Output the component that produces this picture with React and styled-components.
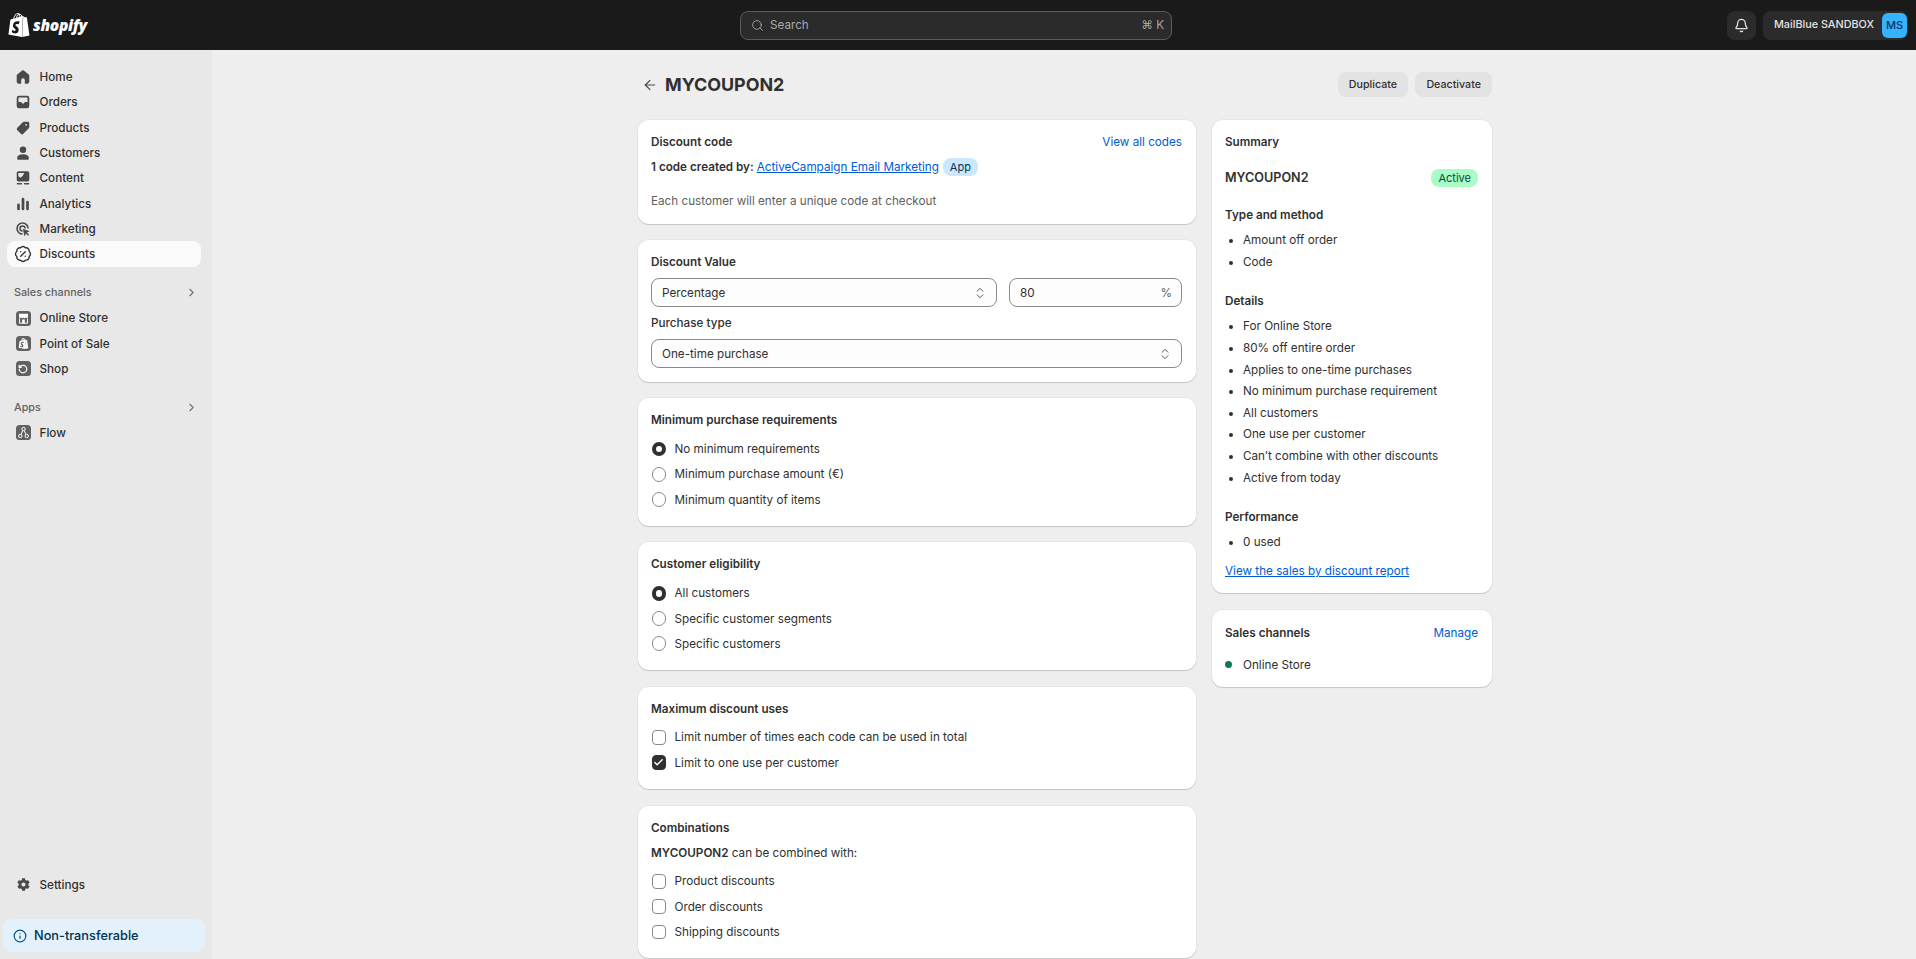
import React from 'react';
import styled, {createGlobalStyle} from 'styled-components';
import {ArrowLeft, BadgePercent, Bell, Check, ChevronRight, ChevronsUpDown, Info, RotateCcw, Search} from 'lucide-react';
import {FaCog} from 'react-icons/fa';
import {SiShopify} from 'react-icons/si';

const GlobalStyle = createGlobalStyle`
    html, body {
        margin: 0;
        height: 100%;
        overflow: hidden;
        background: #eeeeee;
    }

    body {
        font-family: Inter, "Liberation Sans", sans-serif;
        font-size: 11.7px;
        color: #303030;
    }

    * {
        box-sizing: border-box;
    }
`;

const Glyph = ({children}) => (
    <svg width="18" height="18" viewBox="0 0 20 20" fill="#4a4a4a" fillRule="evenodd">{children}</svg>
);

const HomeIcon = () => (
    <Glyph>
        <path d="M10.9 2.9a1.5 1.5 0 0 0-1.8 0L3.6 7.2A1.5 1.5 0 0 0 3 8.4V15a2.5 2.5 0 0 0 2.5 2.5H8v-4a2 2 0 0 1 4 0v4h2.5A2.5 2.5 0 0 0 17 15V8.4a1.5 1.5 0 0 0-.6-1.2z"/>
    </Glyph>
);

const OrdersIcon = () => (
    <Glyph>
        <path d="M5.5 3h9A2.5 2.5 0 0 1 17 5.5v9a2.5 2.5 0 0 1-2.5 2.5h-9A2.5 2.5 0 0 1 3 14.5v-9A2.5 2.5 0 0 1 5.5 3zM5 5.5a.5.5 0 0 1 .5-.5h9a.5.5 0 0 1 .5.5V10h-2.6a1 1 0 0 0-.9.6l-.3.6a1 1 0 0 1-.9.6H9.7a1 1 0 0 1-.9-.6l-.3-.6a1 1 0 0 0-.9-.6H5z"/>
    </Glyph>
);

const ProductsIcon = () => (
    <Glyph>
        <path d="M11 3h4.5A1.5 1.5 0 0 1 17 4.5V9a2 2 0 0 1-.6 1.4l-6 6a2 2 0 0 1-2.8 0l-3.9-3.9a2 2 0 0 1 0-2.9l6-6A2 2 0 0 1 11 3zM14.5 6.5a1 1 0 1 1-2 0 1 1 0 0 1 2 0z"/>
    </Glyph>
);

const CustomersIcon = () => (
    <Glyph>
        <circle cx="10" cy="6.3" r="3.6"/>
        <path d="M3.5 15.5c0-2.5 2.5-4 6.5-4s6.5 1.5 6.5 4v.5a1.5 1.5 0 0 1-1.5 1.5H5A1.5 1.5 0 0 1 3.5 16z"/>
    </Glyph>
);

const ContentIcon = () => (
    <Glyph>
        <path d="M5 2.500h10a2 2 0 0 1 2 2v7.500a2 2 0 0 1-2 2H5a2 2 0 0 1-2-2V4.500a2 2 0 0 1 2-2zM4.800 4.500v3.500l2.500 1.800 2.500-2.300 1.500-3z"/>
        <rect x="3" y="15.5" width="6" height="1.6" rx=".8"/>
        <rect x="11" y="15.5" width="6" height="1.6" rx=".8"/>
    </Glyph>
);

const AnalyticsIcon = () => (
    <Glyph>
        <rect x="3.5" y="9.5" width="3" height="7.5" rx="1.5"/>
        <rect x="8.5" y="3" width="3" height="14" rx="1.5"/>
        <rect x="13.5" y="6.5" width="3" height="10.5" rx="1.5"/>
    </Glyph>
);

const MarketingIcon = () => (
    <Glyph>
        <path d="M9.5 2.5a7 7 0 0 1 7 7h-1.700a5.300 5.300 0 1 0-5.300 5.300v1.700a7 7 0 0 1 0-14z"/>
        <path d="M9.5 5.800a3.700 3.700 0 0 1 3.700 3.700h-1.700a2 2 0 1 0-2 2v1.700a3.700 3.700 0 0 1 0-7.400z"/>
        <path d="M9.800 9.800l7.700 2.600-3.200 1.500 2.400 2.400-1.100 1.100-2.400-2.400-1.500 3.200z"/>
    </Glyph>
);

const StoreIcon = () => (
    <svg width="11" height="11" viewBox="0 0 11 11" fill="none">
        <path d="M1 .8h9v3a1.200 1.200 0 0 1-2.200.6 1.400 1.400 0 0 1-2.300 0 1.400 1.400 0 0 1-2.300 0A1.200 1.200 0 0 1 1 3.800z" fill="#fff"/>
        <path d="M1.5 5.5v4.700h8V5.5" stroke="#fff" strokeWidth="1"/>
        <rect x="4.2" y="6.5" width="2.6" height="3.7" fill="#fff"/>
    </svg>
);

const FlowIcon = () => (
    <svg width="13" height="13" viewBox="0 0 13 13" fill="none" stroke="#fff" strokeWidth="1">
        <circle cx="6.5" cy="3" r="1.7"/>
        <circle cx="3.3" cy="10" r="1.7"/>
        <circle cx="9.7" cy="10" r="1.7"/>
        <path d="M5.7 4.600 4.100 8.400M7.300 4.600l1.600 3.800"/>
    </svg>
);

const mainNav = [
    {label: 'Home', icon: <HomeIcon/>},
    {label: 'Orders', icon: <OrdersIcon/>},
    {label: 'Products', icon: <ProductsIcon/>},
    {label: 'Customers', icon: <CustomersIcon/>},
    {label: 'Content', icon: <ContentIcon/>},
    {label: 'Analytics', icon: <AnalyticsIcon/>},
    {label: 'Marketing', icon: <MarketingIcon/>},
    {label: 'Discounts', icon: <BadgePercent size={18} strokeWidth={1.8} color="#303030"/>, active: true},
];

const channels = [
    {label: 'Online Store', icon: <StoreIcon/>},
    {label: 'Point of Sale', icon: <SiShopify size={11} color="#fff"/>},
    {label: 'Shop', icon: <RotateCcw size={10} strokeWidth={3} color="#fff"/>},
];

const detailItems = [
    'For Online Store',
    '80% off entire order',
    'Applies to one-time purchases',
    'No minimum purchase requirement',
    'All customers',
    'One use per customer',
    'Can’t combine with other discounts',
    'Active from today',
];

const Radio = ({checked, label}) => (
    <ChoiceRow>
        <RadioMark $checked={checked}/>
        {label}
    </ChoiceRow>
);

const Checkbox = ({checked, label}) => (
    <ChoiceRow>
        <CheckMark $checked={checked}>
            {checked ? <Check size={11} strokeWidth={3} color="#fff"/> : ''}
        </CheckMark>
        {label}
    </ChoiceRow>
);

const SelectBox = ({value}) => (
    <Field>
        {value}
        <ChevronsUpDown size={14} strokeWidth={1.6} color="#4a4a4a"/>
    </Field>
);

export default function App() {
    return (
        <div>
            <GlobalStyle/>

            <TopBar>
                <LogoArea>
                    <SiShopify size={24} color="#fff"/>
                    <LogoText>shopify</LogoText>
                </LogoArea>

                <SearchBox>
                    <Search size={13} strokeWidth={1.6} color="#a8a8a8"/>
                    <span>Search</span>
                    <Shortcut>⌘ K</Shortcut>
                </SearchBox>

                <TopActions>
                    <BellButton>
                        <Bell size={15} color="#e3e3e3"/>
                    </BellButton>
                    <AccountButton>
                        <span>MailBlue SANDBOX</span>
                        <Avatar>MS</Avatar>
                    </AccountButton>
                </TopActions>
            </TopBar>

            <Body>
                <Sidebar>
                    {mainNav.map(item => (
                        <NavItem key={item.label} $active={item.active}>
                            <IconSlot>{item.icon}</IconSlot>
                            {item.label}
                        </NavItem>
                    ))}

                    <NavHeading>
                        Sales channels
                        <ChevronRight size={13} color="#707070"/>
                    </NavHeading>
                    {channels.map(item => (
                        <NavItem key={item.label}>
                            <IconSlot><AppIcon>{item.icon}</AppIcon></IconSlot>
                            {item.label}
                        </NavItem>
                    ))}

                    <NavHeading>
                        Apps
                        <ChevronRight size={13} color="#707070"/>
                    </NavHeading>
                    <NavItem>
                        <IconSlot><AppIcon><FlowIcon/></AppIcon></IconSlot>
                        Flow
                    </NavItem>

                    <SettingsItem>
                        <IconSlot><FaCog size={13} color="#4a4a4a"/></IconSlot>
                        Settings
                    </SettingsItem>

                    <PlanBanner>
                        <Info size={14} strokeWidth={2} color="#00527c"/>
                        Non-transferable
                    </PlanBanner>
                </Sidebar>

                <Main>
                    <Page>
                        <PageHeader>
                            <TitleArea>
                                <ArrowLeft size={16} strokeWidth={1.8} color="#4a4a4a"/>
                                <PageTitle>MYCOUPON2</PageTitle>
                            </TitleArea>
                            <HeaderButtons>
                                <HeaderButton>Duplicate</HeaderButton>
                                <HeaderButton>Deactivate</HeaderButton>
                            </HeaderButtons>
                        </PageHeader>

                        <Columns>
                            <LeftColumn>
                                <Card>
                                    <CardHead>
                                        <CardTitle>Discount code</CardTitle>
                                        <PlainLink>View all codes</PlainLink>
                                    </CardHead>
                                    <CreatedBy>
                                        <strong>1 code created by:</strong>
                                        <UnderLink>ActiveCampaign Email Marketing</UnderLink>
                                        <AppBadge>App</AppBadge>
                                    </CreatedBy>
                                    <HelpText>Each customer will enter a unique code at checkout</HelpText>
                                </Card>

                                <Card>
                                    <CardTitle>Discount Value</CardTitle>
                                    <FieldRow>
                                        <SelectBox value="Percentage"/>
                                        <ValueField>
                                            80
                                            <Suffix>%</Suffix>
                                        </ValueField>
                                    </FieldRow>
                                    <FieldLabel>Purchase type</FieldLabel>
                                    <SelectBox value="One-time purchase"/>
                                </Card>

                                <Card>
                                    <CardTitle>Minimum purchase requirements</CardTitle>
                                    <Choices>
                                        <Radio checked label="No minimum requirements"/>
                                        <Radio label="Minimum purchase amount (€)"/>
                                        <Radio label="Minimum quantity of items"/>
                                    </Choices>
                                </Card>

                                <Card>
                                    <CardTitle>Customer eligibility</CardTitle>
                                    <Choices>
                                        <Radio checked label="All customers"/>
                                        <Radio label="Specific customer segments"/>
                                        <Radio label="Specific customers"/>
                                    </Choices>
                                </Card>

                                <Card>
                                    <CardTitle>Maximum discount uses</CardTitle>
                                    <Choices>
                                        <Checkbox label="Limit number of times each code can be used in total"/>
                                        <Checkbox checked label="Limit to one use per customer"/>
                                    </Choices>
                                </Card>

                                <Card>
                                    <CardTitle>Combinations</CardTitle>
                                    <CombineText><strong>MYCOUPON2</strong> can be combined with:</CombineText>
                                    <Choices>
                                        <Checkbox label="Product discounts"/>
                                        <Checkbox label="Order discounts"/>
                                        <Checkbox label="Shipping discounts"/>
                                    </Choices>
                                </Card>
                            </LeftColumn>

                            <RightColumn>
                                <Card>
                                    <CardTitle>Summary</CardTitle>
                                    <SummaryHead>
                                        <CodeName>MYCOUPON2</CodeName>
                                        <StatusBadge>Active</StatusBadge>
                                    </SummaryHead>

                                    <SummaryTitle>Type and method</SummaryTitle>
                                    <BulletList>
                                        <li>Amount off order</li>
                                        <li>Code</li>
                                    </BulletList>

                                    <SummaryTitle>Details</SummaryTitle>
                                    <BulletList>
                                        {detailItems.map(text => <li key={text}>{text}</li>)}
                                    </BulletList>

                                    <SummaryTitle>Performance</SummaryTitle>
                                    <BulletList>
                                        <li>0 used</li>
                                    </BulletList>
                                    <ReportLink>View the sales by discount report</ReportLink>
                                </Card>

                                <ChannelCard>
                                    <CardHead>
                                        <CardTitle>Sales channels</CardTitle>
                                        <PlainLink>Manage</PlainLink>
                                    </CardHead>
                                    <ChannelRow>
                                        <ChannelDot/>
                                        Online Store
                                    </ChannelRow>
                                </ChannelCard>
                            </RightColumn>
                        </Columns>
                    </Page>
                </Main>
            </Body>
        </div>
    );
}

const TopBar = styled.header`
    display: flex;
    align-items: center;
    height: 50px;
    background: #1a1a1a;
`;

const LogoArea = styled.div`
    display: flex;
    align-items: center;
    gap: 2px;
    width: 740px;
    padding-left: 7px;
`;

const LogoText = styled.span`
    font-family: "Open Sans", sans-serif;
    font-size: 15.5px;
    font-weight: 800;
    font-style: italic;
    letter-spacing: -0.3px;
    color: #fff;
`;

const SearchBox = styled.div`
    display: flex;
    align-items: center;
    gap: 6px;
    width: 432px;
    height: 29px;
    padding: 0 7px 0 10px;
    background: #2b2b2b;
    border: 1px solid #5c5c5c;
    border-radius: 8px;
    color: #a8a8a8;
    font-size: 11.7px;
`;

const Shortcut = styled.span`
    margin-left: auto;
    font-size: 11.7px;
`;

const TopActions = styled.div`
    display: flex;
    gap: 7px;
    margin-left: auto;
    padding-right: 8px;
`;

const BellButton = styled.div`
    display: flex;
    align-items: center;
    justify-content: center;
    width: 29px;
    height: 29px;
    background: #2b2b2b;
    border-radius: 8px;
`;

const AccountButton = styled.div`
    display: flex;
    align-items: center;
    justify-content: space-between;
    width: 145px;
    height: 29px;
    padding: 0 1px 0 11px;
    background: #2b2b2b;
    border-radius: 8px;
    color: #e3e3e3;
    font-size: 10.8px;
    font-weight: 500;

    span {
        margin-bottom: 2px;
    }
`;

const Avatar = styled.div`
    display: flex;
    align-items: center;
    justify-content: center;
    width: 25px;
    height: 25px;
    background: #36b3ff;
    border-radius: 6px;
    color: #00335a;
    font-size: 11px;
`;

const Body = styled.div`
    display: flex;
    height: 909px;
`;

const Sidebar = styled.nav`
    display: flex;
    flex-direction: column;
    flex: none;
    width: 212px;
    padding: 14.4px 11px 7px 7px;
    background: #e8e8e8;
`;

const NavItem = styled.div`
    display: flex;
    align-items: center;
    gap: 7.5px;
    height: 25.3px;
    padding-left: 7px;
    border-radius: 8px;
    background: ${props => props.$active ? '#fafafa' : 'transparent'};
    font-size: 11.7px;
    font-weight: 500;
    color: #303030;
`;

const SettingsItem = styled(NavItem)`
    margin-top: auto;
`;

const IconSlot = styled.span`
    display: flex;
    align-items: center;
    justify-content: center;
    flex: none;
    width: 18px;
    height: 18px;
`;

const AppIcon = styled.span`
    display: flex;
    align-items: center;
    justify-content: center;
    width: 15px;
    height: 15px;
    background: #616161;
    border-radius: 3.5px;
`;

const NavHeading = styled.div`
    display: flex;
    align-items: center;
    justify-content: space-between;
    height: 25.8px;
    margin-top: 13px;
    padding: 0 3px 0 7px;
    font-size: 10.8px;
    font-weight: 500;
    color: #616161;
`;

const PlanBanner = styled.div`
    display: flex;
    align-items: center;
    gap: 7px;
    height: 33px;
    margin: 21.5px -4px 0 -4px;
    padding-left: 10px;
    background: #e3f1fd;
    border-radius: 8px;
    color: #00334f;
    font-size: 12.75px;
    font-weight: 500;
`;

const Main = styled.main`
    flex: 1;
    padding: 22px 0 0 2px;
`;

const Page = styled.div`
    width: 854px;
    margin: 0 auto;
`;

const PageHeader = styled.div`
    display: flex;
    align-items: center;
    justify-content: space-between;
    height: 25px;
    margin-bottom: 22.7px;
`;

const TitleArea = styled.div`
    display: flex;
    align-items: center;
    gap: 7px;
    padding-left: 4px;
`;

const PageTitle = styled.h1`
    margin: 0;
    font-size: 17.9px;
    font-weight: 700;
    color: #303030;
`;

const HeaderButtons = styled.div`
    display: flex;
    gap: 7.3px;
`;

const HeaderButton = styled.div`
    display: flex;
    align-items: center;
    height: 25px;
    padding: 0 11px;
    background: #e3e3e3;
    border-radius: 8px;
    font-size: 10.7px;
    font-weight: 550;
    color: #303030;
`;

const Columns = styled.div`
    display: flex;
    align-items: flex-start;
    gap: 16px;
`;

const LeftColumn = styled.div`
    display: flex;
    flex-direction: column;
    gap: 16.3px;
    width: 558px;
`;

const RightColumn = styled.div`
    display: flex;
    flex-direction: column;
    gap: 16.3px;
    width: 280px;
`;

const Card = styled.section`
    padding: 14px 14px 14px 13px;
    background: #fff;
    border-radius: 11px;
    box-shadow: 0 1px 1px rgba(26, 26, 26, 0.16), 0 0 0 1px rgba(26, 26, 26, 0.03);
    line-height: 16px;
    font-size: 11.7px;
`;

const ChannelCard = styled(Card)`
    padding-top: 15px;
`;

const CardHead = styled.div`
    display: flex;
    justify-content: space-between;
`;

const CardTitle = styled.h2`
    margin: 0;
    font-size: 11.7px;
    font-weight: 600;
    color: #303030;
`;

const PlainLink = styled.a`
    color: #005bd3;
`;

const CreatedBy = styled.div`
    display: flex;
    align-items: center;
    gap: 3px;
    height: 16px;
    margin-top: 9px;

    strong {
        font-weight: 600;
    }
`;

const UnderLink = styled.a`
    color: #005bd3;
    text-decoration: underline;
`;

const AppBadge = styled.span`
    padding: 1px 7px;
    margin-left: 1px;
    background: #cce8ff;
    border-radius: 8px;
    font-size: 11px;
    color: #00334f;
`;

const HelpText = styled.div`
    margin: 18px 0 1px;
    color: #616161;
`;

const FieldRow = styled.div`
    display: flex;
    gap: 12px;
    margin: 8px 0;

    > :first-child {
        flex: 1;
    }
`;

const Field = styled.div`
    display: flex;
    align-items: center;
    justify-content: space-between;
    height: 29px;
    padding: 1px 9px 0 10px;
    background: #fdfdfd;
    border: 1px solid #8a8a8a;
    border-radius: 8px;
    color: #303030;
`;

const ValueField = styled(Field)`
    width: 173px;
`;

const Suffix = styled.span`
    color: #616161;
`;

const FieldLabel = styled.div`
    margin-bottom: 8px;
    font-weight: 500;
`;

const Choices = styled.div`
    margin-top: 8.3px;
`;

const ChoiceRow = styled.label`
    display: flex;
    align-items: center;
    gap: 8px;
    height: 25.2px;
`;

const RadioMark = styled.span`
    flex: none;
    width: 14.5px;
    height: 14.5px;
    margin: 0 .5px;
    background: #fff;
    border-radius: 50%;
    border: ${props => props.$checked ? '4px solid #303030' : '1px solid #8a8a8a'};
`;

const CheckMark = styled.span`
    display: flex;
    align-items: center;
    justify-content: center;
    flex: none;
    width: 14.5px;
    height: 14.5px;
    margin: 0 .5px;
    border-radius: 4px;
    background: ${props => props.$checked ? '#303030' : '#fff'};
    border: 1px solid ${props => props.$checked ? '#303030' : '#8a8a8a'};
`;

const CombineText = styled.div`
    margin-top: 9px;

    strong {
        font-weight: 600;
    }
`;

const SummaryHead = styled.div`
    display: flex;
    align-items: center;
    justify-content: space-between;
    height: 16px;
    margin-top: 20px;
`;

const CodeName = styled.div`
    font-size: 12.6px;
    font-weight: 600;
`;

const StatusBadge = styled.span`
    padding: 1px 7px;
    background: #a9fcc5;
    border-radius: 8px;
    font-size: 11px;
    color: #014b40;
`;

const SummaryTitle = styled.h3`
    margin: 21px 0 0;
    font-size: 11.7px;
    font-weight: 600;
`;

const BulletList = styled.ul`
    margin: 7.5px 0 -1.5px;
    padding-left: 18px;

    li {
        height: 21.6px;
        line-height: 21.6px;
    }
`;

const ReportLink = styled(UnderLink)`
    display: block;
    margin-top: 11px;
`;

const ChannelRow = styled.div`
    display: flex;
    align-items: center;
    gap: 11px;
    margin-top: 16px;
`;

const ChannelDot = styled.span`
    width: 7px;
    height: 7px;
    background: #0c7a55;
    border-radius: 50%;
`;
